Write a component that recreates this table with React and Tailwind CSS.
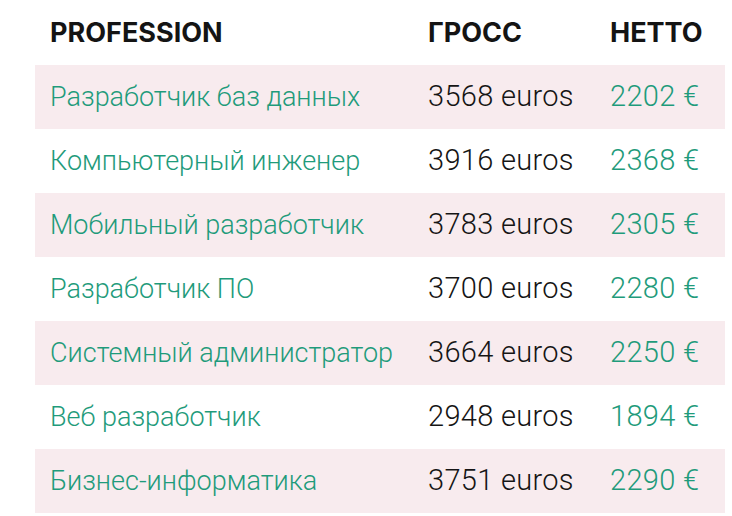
import React from 'react';

const rows = [
    { name: 'Разработчик баз данных', gross: '3568 euros', net: '2202 €' },
    { name: 'Компьютерный инженер', gross: '3916 euros', net: '2368 €' },
    { name: 'Мобильный разработчик', gross: '3783 euros', net: '2305 €' },
    { name: 'Разработчик ПО', gross: '3700 euros', net: '2280 €' },
    { name: 'Системный администратор', gross: '3664 euros', net: '2250 €' },
    { name: 'Веб разработчик', gross: '2948 euros', net: '1894 €' },
    { name: 'Бизнес-информатика', gross: '3751 euros', net: '2290 €' },
];

const App = () => {
    return (
        <div className="w-[732px] h-[516px] bg-white overflow-hidden font-['Roboto',sans-serif]">
            <div className="ml-[35px] w-[690px]">
                {/* Header */}
                <div className="grid grid-cols-[378px_182px_1fr] h-[65px] items-center pl-[15px] pt-[2px] font-['Inter',sans-serif] font-bold text-[27px] text-[#141414]">
                    <span>PROFESSION</span>
                    <span>ГРОСС</span>
                    <span>НЕТТО</span>
                </div>

                {rows.map((r, i) => (
                    <div
                        key={r.name}
                        className={`grid grid-cols-[378px_182px_1fr] h-[64px] items-center pl-[15px] font-light ${i % 2 === 0 ? 'bg-[#f8ebee]' : 'bg-white'}`}
                    >
                        <span className="text-[27px] text-[#1f9b7b] whitespace-nowrap">{r.name}</span>
                        <span className="text-[29px] tracking-[0.3px] text-[#151515]">{r.gross}</span>
                        <span className="text-[29px] tracking-[0.3px] text-[#1f9b7b]">{r.net}</span>
                    </div>
                ))}
            </div>
        </div>
    );
};

export default App;
